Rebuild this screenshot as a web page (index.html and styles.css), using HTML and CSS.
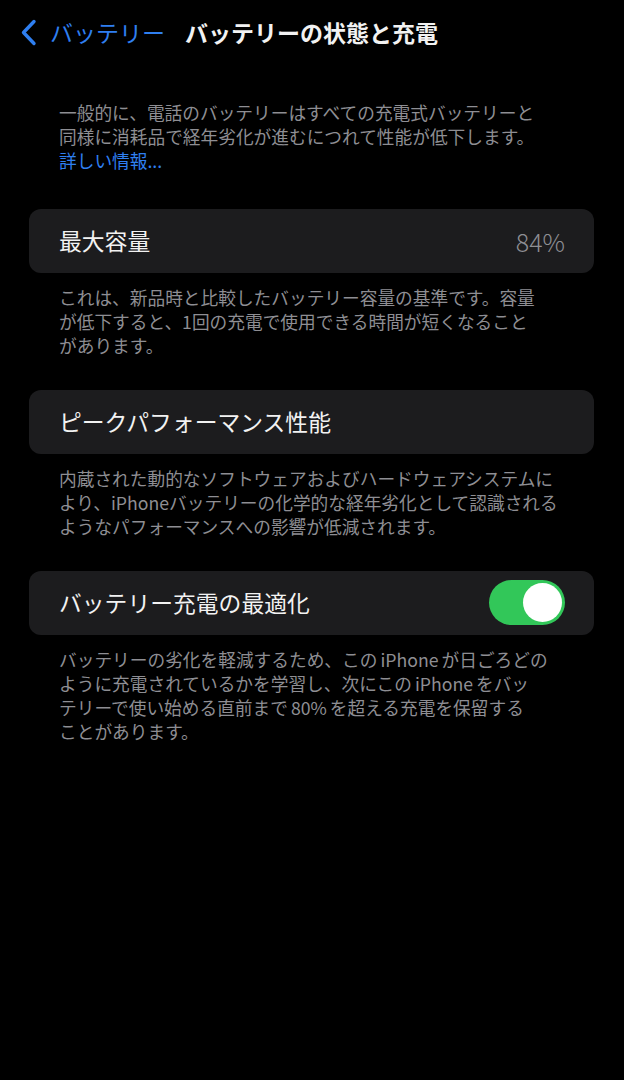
FILE: index.html
```html
<!DOCTYPE html>
<html lang="ja">
<head>
<meta charset="utf-8">
<title>バッテリーの状態と充電</title>
<link rel="stylesheet" href="styles.css">
</head>
<body>
<header class="nav">
  <div class="back">
    <svg class="chev" width="17" height="27" viewBox="0 0 17 27"><path d="M14 2.5 L3.5 13.5 L14 24.5" fill="none" stroke="#2f7ff0" stroke-width="3.4" stroke-linecap="round" stroke-linejoin="round"/></svg>
    <span class="back-label">バッテリー</span>
  </div>
  <h1 class="title">バッテリーの状態と充電</h1>
</header>
<main class="content">
  <p class="note intro">一般的に、電話のバッテリーはすべての充電式バッテリーと<br>同様に消耗品で経年劣化が進むにつれて性能が低下します。<br><span class="link">詳しい情報...</span></p>

  <div class="card"><span class="label">最大容量</span><span class="value">84%</span></div>
  <p class="note">これは、新品時と比較したバッテリー容量の基準です。容量<br>が低下すると、1回の充電で使用できる時間が短くなること<br>があります。</p>

  <div class="card"><span class="label">ピークパフォーマンス性能</span></div>
  <p class="note">内蔵された動的なソフトウェアおよびハードウェアシステムに<br>より、iPhoneバッテリーの化学的な経年劣化として認識される<br>ようなパフォーマンスへの影響が低減されます。</p>

  <div class="card"><span class="label">バッテリー充電の最適化</span><span class="toggle"><span class="knob"></span></span></div>
  <p class="note">バッテリーの劣化を軽減するため、この<span class="latin">iPhone</span>が日ごろどの<br>ように充電されているかを学習し、次にこの<span class="latin">iPhone</span>をバッ<br>テリーで使い始める直前まで<span class="latin">80%</span>を超える充電を保留する<br>ことがあります。</p>
</main>
</body>
</html>
```
FILE: styles.css
```css
html, body {
  margin: 0;
  padding: 0;
  background: #000;
}
body {
  width: 624px;
  height: 1080px;
  font-family: "Noto Sans CJK JP", "Noto Sans", sans-serif;
  color: #fff;
}
.nav {
  height: 64px;
  display: flex;
  align-items: center;
  padding-left: 20px;
  gap: 20px;
}
.back {
  display: flex;
  align-items: center;
  gap: 13px;
}
.chev {
  display: block;
}
.back-label {
  font-size: 23px;
  color: #2f7ff0;
  line-height: 1;
}
.title {
  margin: 0;
  font-size: 23px;
  font-weight: 600;
  line-height: 1;
  color: #f2f2f2;
}
.content {
  padding: 0 30px 0 29px;
  display: flex;
  flex-direction: column;
}
.note {
  margin: 12px 0 33.5px;
  padding-left: 30px;
  font-size: 17.7px;
  line-height: 24px;
  color: #8e8e93;
  white-space: nowrap;
}
.intro {
  margin-top: 36px;
  margin-bottom: 37px;
}
.latin {
  margin: 0 3px;
}
.link {
  color: #2f7ff0;
}
.card {
  height: 63.5px;
  background: #1c1c1e;
  border-radius: 12px;
  display: flex;
  align-items: center;
  justify-content: space-between;
  padding: 0 29px 0 30px;
}
.label {
  font-size: 22.8px;
  color: #f2f2f2;
}
.value {
  font-size: 25px;
  font-weight: 300;
  color: #8e8e93;
}
.toggle {
  width: 76px;
  height: 45px;
  border-radius: 23px;
  background: #32c759;
  display: flex;
  align-items: center;
  justify-content: flex-end;
  padding: 0 3px;
  box-sizing: border-box;
}
.knob {
  width: 39px;
  height: 39px;
  border-radius: 50%;
  background: #fff;
}
```
